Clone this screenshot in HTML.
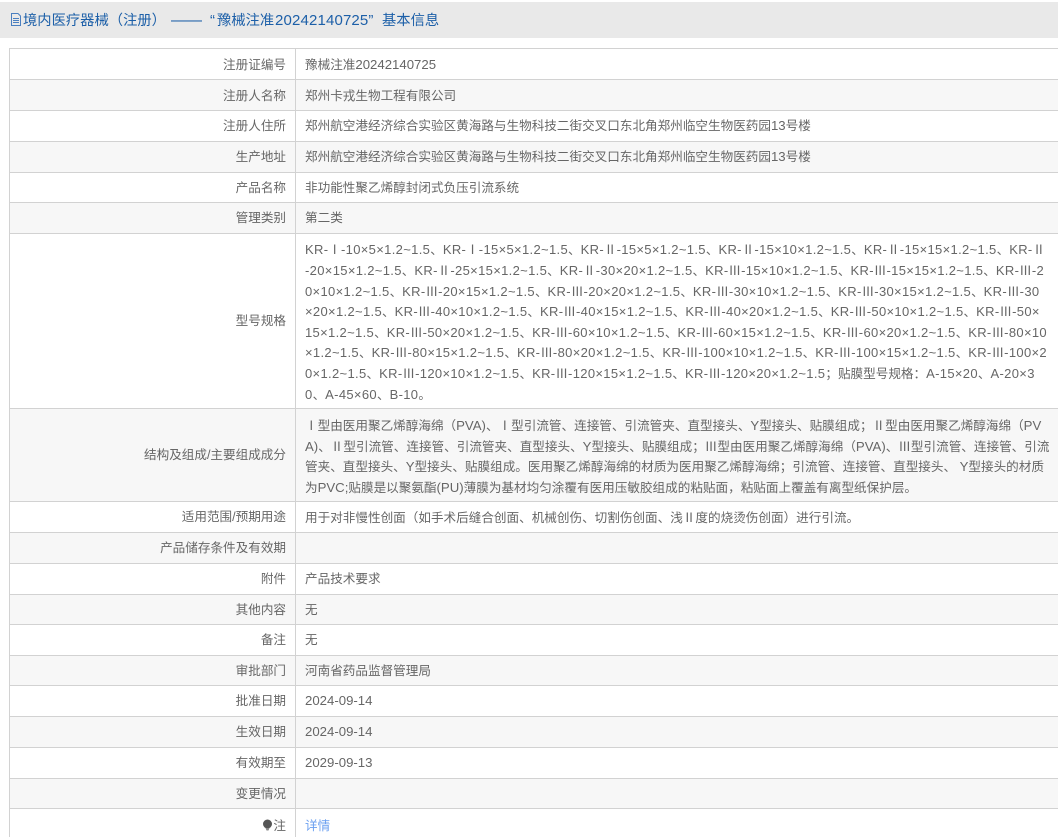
<!DOCTYPE html>
<html lang="zh"><head><meta charset="utf-8"><title>基本信息</title>
<style>
html,body{margin:0;padding:0;background:#fff;}
body{width:1058px;height:837px;overflow:hidden;position:relative;font-family:"Liberation Sans","Noto Sans CJK SC",sans-serif;font-size:12.6px;color:#666;}
u{text-decoration:none;font-size:13.2px;}
i{font-style:normal;font-family:"Noto Sans CJK SC",sans-serif;font-size:12.6px;letter-spacing:0;}
b{font-weight:normal;font-family:"WenQuanYi Zen Hei","Noto Sans CJK SC",sans-serif;font-size:12.6px;letter-spacing:0;}
em{font-style:normal;font-family:"Noto Sans CJK TC",sans-serif;font-size:12.6px;letter-spacing:0;}
.hd{position:absolute;left:0;top:2px;width:1058px;height:36px;background:#e9e9e9;}
.tt{position:absolute;top:3px;height:36px;line-height:36px;font-size:14.300px;color:#1c5fa8;white-space:nowrap;}
.tl{font-size:15px;letter-spacing:.15px;}
.r{position:absolute;left:9px;width:1049px;border-top:1px solid #d2d2d2;border-left:1px solid #d2d2d2;box-sizing:border-box;}
.s{background:#f7f7f7;}
.r::after{content:"";position:absolute;left:285px;top:0;bottom:0;width:1px;background:#d2d2d2;}
.k{position:absolute;left:0;width:276px;text-align:right;top:50%;margin-top:-10px;white-space:nowrap;line-height:20px;}
.v{position:absolute;left:295px;top:50%;margin-top:-10px;white-space:nowrap;line-height:20px;}
.d .k,.d .v{margin-top:-9px;}
.l{position:absolute;left:305px;white-space:nowrap;line-height:21px;height:21px;}
.m{font-size:13px;letter-spacing:.33px;}
a{color:#6a9ff0;text-decoration:none;font-size:12.6px;}
</style></head><body>
<div class="hd"></div>
<svg style="position:absolute;left:10px;top:13px" width="12" height="13" viewBox="0 0 12 13"><path d="M1.500 .5H8L10.500 3V12.500H1.500Z M3 5.500H9 M3 7.500H9 M3 9.500H9" fill="none" stroke="#4a7fc0" stroke-width="1"/></svg>
<div class="tt" style="left:23px">境内医疗器械（注册）</div>
<div class="tt tl" style="left:171px;font-size:15.500px;letter-spacing:0">——</div>
<div class="tt tl" style="left:210px">“</div>
<div class="tt" style="left:217px">豫械注准</div>
<div class="tt tl" style="left:275px">20242140725”</div>
<div class="tt" style="left:382px">基本信息</div>

<div class="r d" style="top:48px;height:31px"><div class="k">注册证编号</div><div class="v">豫械注准<u>20242140725</u></div></div>
<div class="r s d" style="top:79px;height:31px"><div class="k">注册人名称</div><div class="v">郑州卡戎生物工程有限公司</div></div>
<div class="r" style="top:110px;height:31px"><div class="k">注册人住所</div><div class="v">郑州航空港经济综合实验区黄海路与生物科技二街交叉口东北角郑州临空生物医药园<u>13</u>号楼</div></div>
<div class="r s" style="top:141px;height:31px"><div class="k">生产地址</div><div class="v">郑州航空港经济综合实验区黄海路与生物科技二街交叉口东北角郑州临空生物医药园<u>13</u>号楼</div></div>
<div class="r" style="top:172px;height:30px"><div class="k">产品名称</div><div class="v">非功能性聚乙烯醇封闭式负压引流系统</div></div>
<div class="r s" style="top:202px;height:31px"><div class="k">管理类别</div><div class="v">第二类</div></div>
<div class="r" style="top:233px;height:175px"><div class="k">型号规格</div></div>
<div class="r s" style="top:408px;height:93px"><div class="k">结构及组成/主要组成成分</div></div>
<div class="r" style="top:501px;height:31px"><div class="k">适用范围/预期用途</div><div class="v">用于对非慢性创面（如手术后缝合创面、机械创伤、切割伤创面、浅<b>Ⅱ</b>度的烧烫伤创面）进行引流。</div></div>
<div class="r s" style="top:532px;height:31px"><div class="k">产品储存条件及有效期</div></div>
<div class="r" style="top:563px;height:31px"><div class="k">附件</div><div class="v">产品技术要求</div></div>
<div class="r s" style="top:594px;height:30px"><div class="k">其他内容</div><div class="v">无</div></div>
<div class="r" style="top:624px;height:31px"><div class="k">备注</div><div class="v">无</div></div>
<div class="r s" style="top:655px;height:30px"><div class="k">审批部门</div><div class="v">河南省药品监督管理局</div></div>
<div class="r" style="top:685px;height:31px"><div class="k">批准日期</div><div class="v"><u>2024-09-14</u></div></div>
<div class="r s" style="top:716px;height:31px"><div class="k">生效日期</div><div class="v"><u>2024-09-14</u></div></div>
<div class="r" style="top:747px;height:31px"><div class="k">有效期至</div><div class="v"><u>2029-09-13</u></div></div>
<div class="r s" style="top:778px;height:30px"><div class="k">变更情况</div></div>
<div class="r" style="top:808px;height:29px"><div class="k" style="top:17px"><svg width="11" height="12" viewBox="0 0 11 12" style="vertical-align:-1px"><circle cx="5.500" cy="5" r="4.500" fill="#555"/><path d="M3.500 9H7.500L6.500 11.500H4.500Z" fill="#888"/></svg>注</div><div class="v" style="top:17px"><a href="#">详情</a></div></div>

<div class="l m" style="top:238px">KR-<b>Ⅰ</b>-10×5×1.2~1.5<i>、</i>KR-<b>Ⅰ</b>-15×5×1.2~1.5<i>、</i>KR-<b>Ⅱ</b>-15×5×1.2~1.5<i>、</i>KR-<b>Ⅱ</b>-15×10×1.2~1.5<i>、</i>KR-<b>Ⅱ</b>-15×15×1.2~1.5<i>、</i>KR-<b>Ⅱ</b></div>
<div class="l m" style="top:259px">-20×15×1.2~1.5<i>、</i>KR-<b>Ⅱ</b>-25×15×1.2~1.5<i>、</i>KR-<b>Ⅱ</b>-30×20×1.2~1.5<i>、</i>KR-<b>Ⅲ</b>-15×10×1.2~1.5<i>、</i>KR-<b>Ⅲ</b>-15×15×1.2~1.5<i>、</i>KR-<b>Ⅲ</b>-2</div>
<div class="l m" style="top:280px">0×10×1.2~1.5<i>、</i>KR-<b>Ⅲ</b>-20×15×1.2~1.5<i>、</i>KR-<b>Ⅲ</b>-20×20×1.2~1.5<i>、</i>KR-<b>Ⅲ</b>-30×10×1.2~1.5<i>、</i>KR-<b>Ⅲ</b>-30×15×1.2~1.5<i>、</i>KR-<b>Ⅲ</b>-30</div>
<div class="l m" style="top:300px">×20×1.2~1.5<i>、</i>KR-<b>Ⅲ</b>-40×10×1.2~1.5<i>、</i>KR-<b>Ⅲ</b>-40×15×1.2~1.5<i>、</i>KR-<b>Ⅲ</b>-40×20×1.2~1.5<i>、</i>KR-<b>Ⅲ</b>-50×10×1.2~1.5<i>、</i>KR-<b>Ⅲ</b>-50×</div>
<div class="l m" style="top:321px">15×1.2~1.5<i>、</i>KR-<b>Ⅲ</b>-50×20×1.2~1.5<i>、</i>KR-<b>Ⅲ</b>-60×10×1.2~1.5<i>、</i>KR-<b>Ⅲ</b>-60×15×1.2~1.5<i>、</i>KR-<b>Ⅲ</b>-60×20×1.2~1.5<i>、</i>KR-<b>Ⅲ</b>-80×10</div>
<div class="l m" style="top:341px">×1.2~1.5<i>、</i>KR-<b>Ⅲ</b>-80×15×1.2~1.5<i>、</i>KR-<b>Ⅲ</b>-80×20×1.2~1.5<i>、</i>KR-<b>Ⅲ</b>-100×10×1.2~1.5<i>、</i>KR-<b>Ⅲ</b>-100×15×1.2~1.5<i>、</i>KR-<b>Ⅲ</b>-100×2</div>
<div class="l m" style="top:362px">0×1.2~1.5<i>、</i>KR-<b>Ⅲ</b>-120×10×1.2~1.5<i>、</i>KR-<b>Ⅲ</b>-120×15×1.2~1.5<i>、</i>KR-<b>Ⅲ</b>-120×20×1.2~1.5<em>；</em><i>贴膜型号规格</i><em>：</em>A-15×20<i>、</i>A-20×3</div>
<div class="l m" style="top:383px">0<i>、</i>A-45×60<i>、</i>B-10<i>。</i></div>

<div class="l" style="top:414px"><b>Ⅰ</b>型由医用聚乙烯醇海绵（<u>PVA)</u>、<b>Ⅰ</b>型引流管、连接管、引流管夹、直型接头、<u>Y</u>型接头、贴膜组成<em>；</em><b>Ⅱ</b>型由医用聚乙烯醇海绵（<u>PV</u></div>
<div class="l" style="top:435px"><u>A)</u>、<b>Ⅱ</b>型引流管、连接管、引流管夹、直型接头、<u>Y</u>型接头、贴膜组成<em>；</em><b>Ⅲ</b>型由医用聚乙烯醇海绵（<u>PVA)</u>、<b>Ⅲ</b>型引流管、连接管、引流</div>
<div class="l" style="top:455px">管夹、直型接头、<u>Y</u>型接头、贴膜组成。医用聚乙烯醇海绵的材质为医用聚乙烯醇海绵<em>；</em>引流管、连接管、直型接头、 <u>Y</u>型接头的材质</div>
<div class="l" style="top:476px">为<u>PVC;</u>贴膜是以聚氨酯<u>(PU)</u>薄膜为基材均匀涂覆有医用压敏胶组成的粘贴面<em>，</em>粘贴面上覆盖有离型纸保护层。</div>
</body></html>
